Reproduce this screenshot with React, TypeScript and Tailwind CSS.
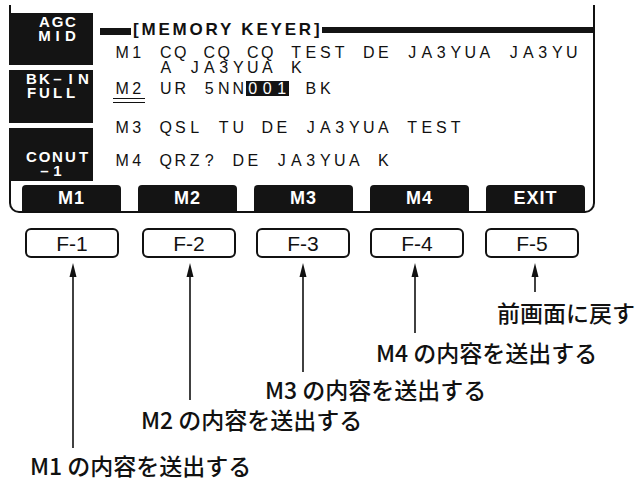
import React from "react";

function Cells({ text, w = "w-[14.5px]" }: { text: string; w?: string }) {
  return (
    <>
      {Array.from(text).map((c, i) => (
        <span key={i} className={`block shrink-0 text-center ${w}`}>
          {c === " " ? "\u00a0" : c}
        </span>
      ))}
    </>
  );
}

function SideLine({ text }: { text: string }) {
  return (
    <div className="flex h-[14px] leading-[14px] text-[15px] font-bold">
      {Array.from(text).map((c, i) => (
        <span key={i} className="block w-[13px] shrink-0 text-center">
          {c === " " ? "\u00a0" : c}
        </span>
      ))}
    </div>
  );
}

const FKEYS = [
  { t: "F-1", c: "ml-[25px]" },
  { t: "F-2", c: "ml-[23px]" },
  { t: "F-3", c: "ml-[20px]" },
  { t: "F-4", c: "ml-[20px]" },
  { t: "F-5", c: "ml-[21px]" },
];

const ARROWS = [
  { x: 73, b: 190 },
  { x: 190, b: 142 },
  { x: 303, b: 114 },
  { x: 415, b: 75 },
  { x: 535, b: 34 },
];

export default function App() {
  const row = "flex h-[15px] leading-[15px] text-[16px] pl-[22px] whitespace-nowrap";
  return (
    <div className="w-[635px] h-[479px] bg-white overflow-hidden text-[#111] font-['Liberation_Sans',sans-serif]">
      {/* LCD screen frame */}
      <div className="ml-[9px] mt-[5px] w-[586px] h-[208px] border-l-2 border-r-2 border-b-2 border-[#111] rounded-b-[10px] flex flex-col">
        <div className="flex h-[180px]">
          {/* left side boxes */}
          <div className="-ml-[2px] w-[84px] flex flex-col text-white">
            <div className="mt-[8px] h-[52px] bg-[#141414] pt-[2px] pl-[16px]">
              <SideLine text=" AGC" />
              <SideLine text=" MID" />
            </div>
            <div className="h-[5px] bg-white" />
            <div className="h-[53px] bg-[#141414] pt-[2px] pl-[16px]">
              <SideLine text="BK–IN" />
              <SideLine text="FULL" />
            </div>
            <div className="h-[5px] bg-white" />
            <div className="h-[53px] bg-[#141414] pt-[22px] pl-[16px]">
              <SideLine text="CONUT" />
              <SideLine text=" –1" />
            </div>
          </div>

          {/* right content */}
          <div className="flex-1 flex flex-col">
            <div className="mt-[16px] h-[17px] flex items-start">
              <div className="ml-[7px] mt-[7px] w-[31px] h-[7px] bg-[#141414]" />
              <div className="ml-[2px] text-[17px] leading-[17px] font-bold tracking-[2.8px] whitespace-nowrap">
                [MEMORY KEYER]
              </div>
              <div className="flex-1 mt-[6px] h-[6px] bg-[#141414]" />
            </div>

            <div className={`${row} mt-[7px]`}>
              <Cells text="M1 CQ CQ CQ TEST DE JA3YUA JA3YU" />
            </div>
            <div className={row}>
              <Cells text="   A JA3YUA K" />
            </div>

            <div className={`${row} mt-[6px]`}>
              <div className="relative flex">
                <Cells text="M2" />
                <div className="absolute left-[-2px] right-[-1px] top-[17px] h-[5px] border-y-[1.5px] border-[#111]" />
              </div>
              <Cells text=" UR 5NN" />
              <div className="flex bg-[#141414] text-white">
                <Cells text="001" />
              </div>
              <Cells text=" BK" />
            </div>

            <div className={`${row} mt-[24px]`}>
              <Cells text="M3 QSL TU DE JA3YUA TEST" />
            </div>

            <div className={`${row} mt-[18px]`}>
              <Cells text="M4 QRZ? DE JA3YUA K" />
            </div>
          </div>
        </div>

        {/* function bar */}
        <div className="flex h-[26px] gap-[17px] pl-[11px]">
          {["M1", "M2", "M3", "M4", "EXIT"].map((l) => (
            <div
              key={l}
              className="w-[99px] h-full rounded-t-[4px] bg-[#141414] text-white flex items-center justify-center text-[18px] leading-none font-bold tracking-[1px]"
            >
              {l}
            </div>
          ))}
        </div>
      </div>

      {/* F keys */}
      <div className="flex mt-[15px] h-[30px]">
        {FKEYS.map((k) => (
          <div
            key={k.t}
            className={`${k.c} w-[94px] h-[30px] border-2 border-[#111] rounded-[6px] flex items-center justify-center text-[21px] leading-none`}
          >
            {k.t}
          </div>
        ))}
      </div>

      {/* arrows & labels */}
      <div className="relative h-[221px]">
        <svg className="absolute inset-0 pointer-events-none" width="635" height="221" viewBox="0 0 635 221">
          {ARROWS.map((a) => (
            <g key={a.x}>
              <line x1={a.x} y1={16} x2={a.x} y2={a.b} stroke="#111" strokeWidth="1.6" />
              <polygon points={`${a.x},5 ${a.x - 3.5},19 ${a.x + 3.5},19`} fill="#111" />
            </g>
          ))}
        </svg>
        <div className="flex flex-col items-start text-[23px] leading-[23px] font-medium whitespace-nowrap font-['Noto_Sans_CJK_JP',sans-serif]">
          <div className="mt-[43px] ml-[497px]">前画面に戻す</div>
          <div className="mt-[17px] ml-[376px]">
            M4<span className="ml-[5px]">の内容を送出する</span>
          </div>
          <div className="mt-[14px] ml-[265px]">
            M3<span className="ml-[5px]">の内容を送出する</span>
          </div>
          <div className="mt-[7px] ml-[141px]">
            M2<span className="ml-[5px]">の内容を送出する</span>
          </div>
          <div className="mt-[23px] ml-[30px]">
            M1<span className="ml-[5px]">の内容を送出する</span>
          </div>
        </div>
      </div>
    </div>
  );
}
